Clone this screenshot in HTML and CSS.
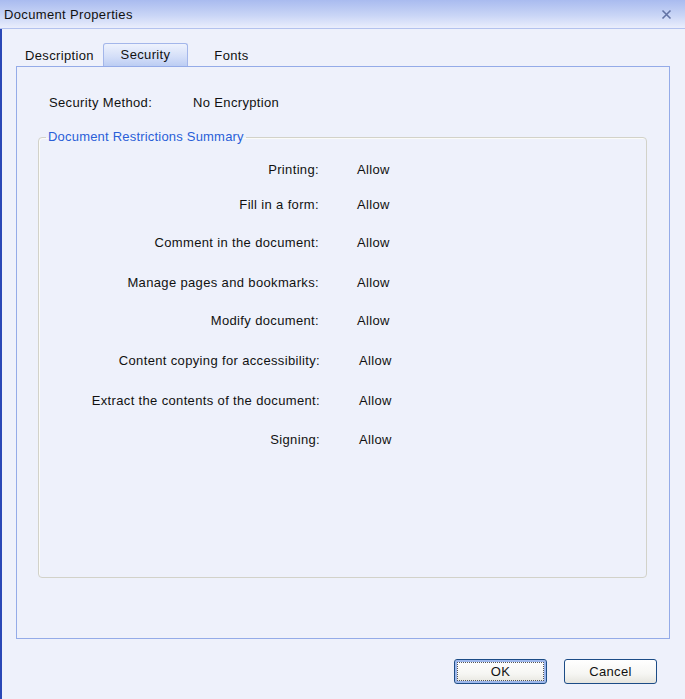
FILE: index.html
```html
<!DOCTYPE html>
<html lang="en">
<head>
    <meta charset="UTF-8">
    <meta name="viewport" content="width=device-width, initial-scale=1.0">
    <title>Document Properties</title>
    <link rel="stylesheet" href="styles.css">
</head>
<body>
    <div class="titlebar">
        <span class="title">Document Properties</span>
        <svg class="close" width="11" height="11" viewBox="0 0 11 11">
            <path d="M1.5 1.5 L9.5 9.5 M9.5 1.5 L1.5 9.5" stroke="#6272a4" stroke-width="1.6" fill="none"/>
        </svg>
    </div>

    <div class="window">
        <div class="tabs">
            <div class="tab">Description</div>
            <div class="tab active">Security</div>
            <div class="tab">Fonts</div>
        </div>

        <div class="panel">
            <div class="method">
                <span class="method-label">Security Method:</span>
                <span>No Encryption</span>
            </div>

            <fieldset class="summary">
                <legend>Document Restrictions Summary</legend>
                <div class="rows">
                    <span class="label">Printing:</span><span>Allow</span>
                    <span class="label">Fill in a form:</span><span>Allow</span>
                    <span class="label">Comment in the document:</span><span>Allow</span>
                    <span class="label">Manage pages and bookmarks:</span><span>Allow</span>
                    <span class="label">Modify document:</span><span>Allow</span>
                    <span class="label shift">Content copying for accessibility:</span><span class="shift">Allow</span>
                    <span class="label shift">Extract the contents of the document:</span><span class="shift">Allow</span>
                    <span class="label shift">Signing:</span><span class="shift">Allow</span>
                </div>
            </fieldset>
        </div>

        <div class="actions">
            <button class="btn default">OK</button>
            <button class="btn">Cancel</button>
        </div>
    </div>
</body>
</html>
```

FILE: styles.css
```css
html, body {
    margin: 0;
    height: 100%;
}

body {
    background: #eef1fb;
    font-family: "Liberation Sans", Arial, sans-serif;
    font-size: 13px;
    line-height: 16px;
    letter-spacing: 0.35px;
    color: #111;
    overflow: hidden;
}

.titlebar {
    height: 28px;
    border-bottom: 1px solid #b3c2ee;
    background: linear-gradient(180deg, #a9bbef 0%, #c9d5f6 55%, #eaeefc 100%);
    display: flex;
    align-items: center;
    justify-content: space-between;
    padding: 0 13px 0 4px;
}

.title {
    padding-top: 2px;
}

.window {
    border-left: 2px solid #2a48b6;
    height: 670px;
    padding: 14px 0 0 14px;
    box-sizing: border-box;
}

.tabs {
    display: flex;
    height: 23px;
    align-items: flex-end;
}

.tab {
    width: 87px;
    height: 21px;
    line-height: 22px;
    text-align: center;
}

.tab.active {
    width: 83px;
    height: 22px;
    line-height: 21px;
    border: 1px solid #a3b6ea;
    border-bottom: none;
    border-radius: 3px 3px 0 0;
    background: linear-gradient(180deg, #eef2fd 0%, #d3def8 60%, #bccdf3 100%);
}

.panel {
    width: 654px;
    height: 573px;
    box-sizing: border-box;
    border: 1px solid #94abe8;
    padding: 28px 22px 0 21px;
}

.method {
    display: flex;
    padding-left: 11px;
}

.method-label {
    width: 144px;
}

.summary {
    margin: 18px 0 0 0;
    padding: 0;
    height: 449px;
    box-sizing: border-box;
    border: 1px solid #d2d2c9;
    border-radius: 4px;
    box-shadow: inset 1px 1px 0 #fbfbf8;
}

.summary legend {
    color: #2a5fd8;
    margin-left: 7px;
    padding: 0 2px;
    letter-spacing: 0.2px;
}

.rows {
    display: grid;
    grid-template-columns: 280px auto;
    grid-template-rows: 35px 38px 40px 38px 40px 40px 39px 16px;
    column-gap: 38px;
    padding-top: 17px;
}

.label {
    text-align: right;
}

.label.shift {
    margin-right: -1px;
}

span.shift:not(.label) {
    margin-left: 2px;
}

.actions {
    display: flex;
    justify-content: flex-end;
    gap: 17px;
    padding: 20px 28px 0 0;
}

.btn {
    width: 93px;
    height: 25px;
    font-family: inherit;
    font-size: 13px;
    letter-spacing: 0.35px;
    color: #111;
    border: 1px solid #1c4c86;
    border-radius: 3px;
    background: linear-gradient(180deg, #ffffff 0%, #f6f6f3 60%, #e6e5de 100%);
    padding: 0;
}

.btn.default {
    box-shadow: inset 0 0 0 2px #9db7ec;
    outline: 1px dotted #555;
    outline-offset: -4px;
}
```
